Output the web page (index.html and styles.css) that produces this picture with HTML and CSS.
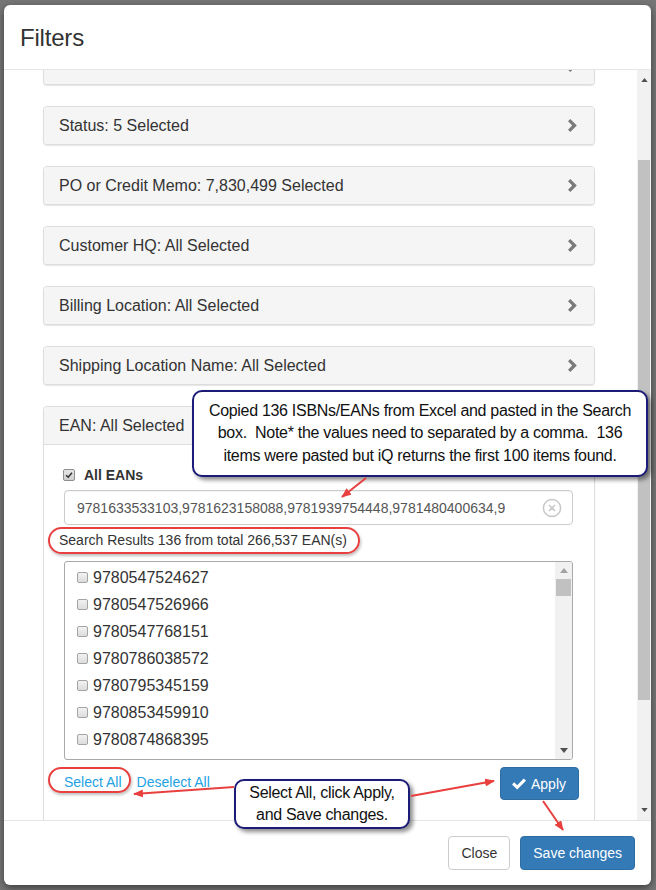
FILE: index.html
```html
<!DOCTYPE html>
<html lang="en">
<head>
<meta charset="utf-8">
<title>Filters</title>
<link rel="stylesheet" href="styles.css">
</head>
<body>
<div class="modal">
  <div class="modal-header">
    <h4 class="modal-title">Filters</h4>
  </div>

  <div class="modal-body">
    <div class="body-scroll">
      <div class="filter-list">
        <div class="panel">
          <div class="panel-heading"><span></span><svg class="chev" viewBox="0 0 10 13"><polygon points="0,2.3 2.3,0 8.8,6.5 2.3,13 0,10.7 4.2,6.5"/></svg></div>
        </div>
        <div class="panel">
          <div class="panel-heading"><span>Status: 5 Selected</span><svg class="chev" viewBox="0 0 10 13"><polygon points="0,2.3 2.3,0 8.8,6.5 2.3,13 0,10.7 4.2,6.5"/></svg></div>
        </div>
        <div class="panel">
          <div class="panel-heading"><span>PO or Credit Memo: 7,830,499 Selected</span><svg class="chev" viewBox="0 0 10 13"><polygon points="0,2.3 2.3,0 8.8,6.5 2.3,13 0,10.7 4.2,6.5"/></svg></div>
        </div>
        <div class="panel">
          <div class="panel-heading"><span>Customer HQ: All Selected</span><svg class="chev" viewBox="0 0 10 13"><polygon points="0,2.3 2.3,0 8.8,6.5 2.3,13 0,10.7 4.2,6.5"/></svg></div>
        </div>
        <div class="panel">
          <div class="panel-heading"><span>Billing Location: All Selected</span><svg class="chev" viewBox="0 0 10 13"><polygon points="0,2.3 2.3,0 8.8,6.5 2.3,13 0,10.7 4.2,6.5"/></svg></div>
        </div>
        <div class="panel">
          <div class="panel-heading"><span>Shipping Location Name: All Selected</span><svg class="chev" viewBox="0 0 10 13"><polygon points="0,2.3 2.3,0 8.8,6.5 2.3,13 0,10.7 4.2,6.5"/></svg></div>
        </div>

        <div class="panel panel-open">
          <div class="panel-heading"><span>EAN: All Selected</span></div>
          <div class="panel-body">
            <label class="all-row">
              <span class="cb cb-checked"><svg viewBox="0 0 12 12"><path d="M2.5 6.2 L5 8.7 L9.6 3.2"/></svg></span>
              <b>All EANs</b>
            </label>

            <div class="search-box">
              <span class="search-text">9781633533103,9781623158088,9781939754448,9781480400634,9</span>
              <svg class="clear-btn" viewBox="0 0 20 20"><circle cx="10" cy="10" r="8.6"/><path d="M7 7 L13 13 M13 7 L7 13"/></svg>
            </div>

            <div class="results">Search Results 136 from total 266,537 EAN(s)</div>

            <div class="ean-list">
              <div class="ean-items">
                <label class="ean-row"><span class="cb"></span>9780547524627</label>
                <label class="ean-row"><span class="cb"></span>9780547526966</label>
                <label class="ean-row"><span class="cb"></span>9780547768151</label>
                <label class="ean-row"><span class="cb"></span>9780786038572</label>
                <label class="ean-row"><span class="cb"></span>9780795345159</label>
                <label class="ean-row"><span class="cb"></span>9780853459910</label>
                <label class="ean-row"><span class="cb"></span>9780874868395</label>
              </div>
              <div class="mini-scroll">
                <div class="sb-btn"><svg viewBox="0 0 8 5"><polygon class="tri-off" points="0,5 4,0 8,5"/></svg></div>
                <div class="mini-thumb"></div>
                <div class="sb-fill"></div>
                <div class="sb-btn"><svg viewBox="0 0 8 5"><polygon class="tri" points="0,0 8,0 4,5"/></svg></div>
              </div>
            </div>

            <div class="actions-row">
              <div class="links">
                <a href="#" class="link">Select All</a>
                <a href="#" class="link">Deselect All</a>
              </div>
              <button class="btn btn-primary btn-apply">
                <svg class="ok-icon" viewBox="0 0 14 12"><polygon points="0,6.4 2.2,4.2 5.2,7.2 11.8,0.6 14,2.8 5.2,11.6"/></svg>Apply
              </button>
            </div>
          </div>
        </div>
      </div>
    </div>

    <div class="scrollbar">
      <div class="sb-btn"><svg viewBox="0 0 8 5"><polygon class="tri" points="0,5 4,0 8,5"/></svg></div>
      <div class="thumb"></div>
      <div class="sb-fill"></div>
      <div class="sb-btn"><svg viewBox="0 0 8 5"><polygon class="tri" points="0,0 8,0 4,5"/></svg></div>
    </div>
  </div>

  <div class="modal-footer">
    <button class="btn btn-default">Close</button>
    <button class="btn btn-primary">Save changes</button>
  </div>
</div>

<div class="page-peek">
  <span class="c1">2020100</span><span class="c2">INGRAM</span><span class="c3">2020100</span><span class="c4">INGRAM</span><span class="c5">UNITED</span><span class="c6">NORTH</span><span class="c7">9780547524627</span>
</div>

<!-- annotation layer -->
<div class="ring ring-results"></div>
<div class="ring ring-select"></div>

<div class="callout callout-search">
  <p>Copied 136 ISBNs/EANs from Excel and pasted in the Search<br>box.&nbsp; Note* the values need to separated by a comma.&nbsp; 136<br>items were pasted but iQ returns the first 100 items found.</p>
</div>

<div class="callout callout-apply">
  <p>Select All, click Apply,<br>and Save changes.</p>
</div>

<svg class="arrows" viewBox="0 0 656 890">
  <defs>
    <marker id="head" markerUnits="userSpaceOnUse" markerWidth="10" markerHeight="8" refX="9" refY="4" orient="auto">
      <path d="M0,0 L10,4 L0,8 z" fill="#e8403f"/>
    </marker>
  </defs>
  <line x1="366" y1="478" x2="342" y2="497" marker-end="url(#head)"/>
  <line x1="234" y1="787" x2="134" y2="794" marker-end="url(#head)"/>
  <line x1="411" y1="796" x2="494" y2="781" marker-end="url(#head)"/>
  <line x1="543" y1="801" x2="563" y2="830" marker-end="url(#head)"/>
</svg>
</body>
</html>
```

FILE: styles.css
```css
* { box-sizing: border-box; }

html, body { margin: 0; padding: 0; }

body {
  width: 656px;
  height: 890px;
  overflow: hidden;
  position: relative;
  background: #777;
  font-family: "Liberation Sans", Arial, Helvetica, sans-serif;
  font-size: 14px;
  color: #333;
}

/* ---------- modal shell ---------- */
.modal {
  margin: 5px 5px 0 4px;
  width: 647px;
  height: 880px;
  background: #fff;
  border-radius: 6px;
  box-shadow: 0 3px 9px rgba(0, 0, 0, 0.5);
  display: flex;
  flex-direction: column;
  overflow: hidden;
}

.modal-header {
  flex: none;
  height: 65px;
  border-bottom: 1px solid #e5e5e5;
  display: flex;
  align-items: center;
  padding: 1px 16px 0;
}

.modal-title {
  margin: 0;
  font-size: 24px;
  font-weight: normal;
  line-height: 1;
  letter-spacing: -0.2px;
  color: #333;
}

.modal-body {
  flex: none;
  height: 750px;
  display: flex;
}

.body-scroll {
  flex: 1;
  overflow: hidden;
  padding-left: 39px;
}

.filter-list {
  width: 552px;
  margin-top: -24px;
  display: flex;
  flex-direction: column;
  gap: 21px;
}

/* ---------- filter panels ---------- */
.panel {
  background: #fff;
  border: 1px solid #ddd;
  border-radius: 4px;
  box-shadow: 0 1px 1px rgba(0, 0, 0, 0.1);
}

.panel-heading {
  height: 37px;
  background: #f5f5f5;
  border-radius: 3px;
  display: flex;
  align-items: center;
  justify-content: space-between;
  padding: 0 16px 0 15px;
  font-size: 16px;
  color: #333;
}

.chev { width: 10px; height: 13px; }
.chev polygon { fill: #7a7a7a; }

.panel-open .panel-heading {
  height: 38px;
  border-bottom: 1px solid #ddd;
  border-radius: 3px 3px 0 0;
}

.panel-body {
  padding: 15px 15px 40px;
}

.all-row {
  height: 30px;
  display: flex;
  align-items: center;
  gap: 9px;
  padding-left: 4px;
  font-size: 14px;
  color: #333;
}

/* checkbox boxes */
.cb {
  flex: none;
  width: 11px;
  height: 11px;
  border: 1px solid #a4a4a4;
  border-radius: 2px;
  background: linear-gradient(#f2f2f2, #dcdcdc);
  display: inline-block;
}

.cb-checked {
  width: 12px;
  height: 12px;
  background: linear-gradient(#e6e6e6, #cfcfcf);
  border-color: #8f8f8f;
}

.cb-checked svg {
  display: block;
  width: 10px;
  height: 10px;
}

.cb-checked path {
  fill: none;
  stroke: #333;
  stroke-width: 1.8;
}

/* search input */
.search-box {
  margin: 0 6px 0 5px;
  height: 35px;
  border: 1px solid #ccc;
  border-radius: 4px;
  display: flex;
  align-items: center;
  justify-content: space-between;
  padding: 1px 10px 0 12px;
  box-shadow: inset 0 1px 1px rgba(0, 0, 0, 0.05);
}

.search-text {
  font-size: 14px;
  color: #555;
  white-space: nowrap;
  overflow: hidden;
}

.clear-btn { width: 20px; height: 20px; flex: none; }
.clear-btn circle { fill: none; stroke: #c8c8c8; stroke-width: 1.5; }
.clear-btn path { stroke: #c8c8c8; stroke-width: 1.6; }

.results {
  line-height: 30px;
  margin-bottom: 6px;
  font-size: 14px;
  color: #333;
}

/* EAN list box */
.ean-list {
  margin: 0 6px 0 5px;
  height: 199px;
  border: 1px solid #a9a9a9;
  border-radius: 3px;
  display: flex;
  overflow: hidden;
}

.ean-items {
  flex: 1;
  padding-top: 2px;
}

.ean-row {
  height: 27px;
  display: flex;
  align-items: center;
  gap: 5px;
  padding-left: 12px;
  font-size: 16px;
  color: #333;
}

.mini-scroll {
  flex: none;
  width: 17px;
  background: #f1f1f1;
  display: flex;
  flex-direction: column;
}

.mini-thumb {
  height: 17px;
  margin: 0 1px;
  background: #c1c1c1;
}

.sb-btn {
  flex: none;
  height: 17px;
  display: flex;
  align-items: center;
  justify-content: center;
}

.sb-btn svg { width: 8px; height: 5px; }
.tri { fill: #505050; }
.tri-off { fill: #a3a3a3; }

.sb-fill { flex: 1; }

/* bottom action row */
.actions-row {
  margin-top: 7px;
  display: flex;
  align-items: center;
  justify-content: space-between;
}

.links { padding-left: 5px; padding-bottom: 3px; display: flex; gap: 15px; }

.link {
  color: #22a2e4;
  text-decoration: none;
  font-size: 14px;
}

/* buttons */
.btn {
  font-family: inherit;
  font-size: 14px;
  height: 34px;
  padding: 0 12px;
  border-radius: 4px;
  border: 1px solid transparent;
  display: inline-flex;
  align-items: center;
  justify-content: center;
  cursor: pointer;
}

.btn-default { background: #fff; border-color: #ccc; color: #333; }
.btn-primary { background: #337ab7; border-color: #2e6da4; color: #fff; }

.btn-apply { height: 33px; gap: 5px; padding: 0 12px 0 11px; }
.ok-icon { width: 14px; height: 12px; }
.ok-icon polygon { fill: #fff; }

/* outer scrollbar */
.scrollbar {
  flex: none;
  width: 14px;
  background: #f1f1f1;
  display: flex;
  flex-direction: column;
}

.scrollbar .sb-btn { height: 20px; }
.scrollbar .sb-btn svg { width: 7px; height: 4px; }

.thumb {
  margin: 70px 1px 0;
  height: 540px;
  background: #c1c1c1;
}

.modal-footer {
  flex: none;
  height: 65px;
  border-top: 1px solid #e5e5e5;
  display: flex;
  justify-content: flex-end;
  align-items: center;
  gap: 10px;
  padding: 0 16px;
}

/* page behind the modal */
.page-peek {
  height: 20px;
  display: flex;
  font-size: 14px;
  line-height: 20px;
  color: #252525;
  margin-top: 1px;
  white-space: nowrap;
}

.page-peek span { flex: none; }
.c1 { width: 87px; margin-left: -20px; }
.c2 { width: 106px; }
.c3 { width: 74px; }
.c4 { width: 106px; }
.c5 { width: 74px; }
.c6 { width: 83px; }

/* ---------- annotations ---------- */
.ring {
  position: absolute;
  border: 2px solid #e8403f;
  border-radius: 16px;
  box-shadow: 1px 2px 3px rgba(0, 0, 0, 0.25);
}

.ring-results { left: 48px; top: 527px; width: 312px; height: 27px; }
.ring-select { left: 48px; top: 767px; width: 83px; height: 26px; }

.callout {
  position: absolute;
  background: #fff;
  border: 2px solid #1b1b78;
  border-radius: 10px;
  box-shadow: 3px 3px 4px rgba(0, 0, 0, 0.45);
  display: flex;
  align-items: center;
  justify-content: center;
  text-align: center;
  font-size: 16px;
  letter-spacing: -0.3px;
  line-height: 22.5px;
  color: #111;
}

.callout p { margin: 0; }

.callout-search { left: 192px; top: 390px; width: 456px; height: 87px; }
.callout-apply { left: 234px; top: 779px; width: 176px; height: 50px; line-height: 22px; }

.arrows {
  position: absolute;
  left: 0;
  top: 0;
  width: 656px;
  height: 890px;
  pointer-events: none;
}

.arrows line {
  stroke: #e8403f;
  stroke-width: 2;
}
```
